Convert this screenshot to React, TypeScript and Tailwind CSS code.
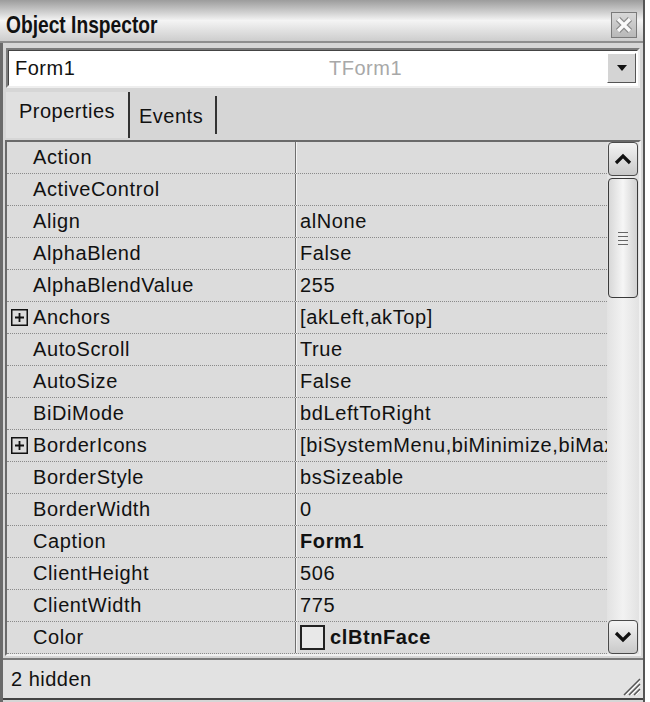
import React from 'react';

type Prop = {
  name: string;
  value?: string;
  expandable?: boolean;
  bold?: boolean;
  swatch?: boolean;
};

const props: Prop[] = [
  { name: 'Action' },
  { name: 'ActiveControl' },
  { name: 'Align', value: 'alNone' },
  { name: 'AlphaBlend', value: 'False' },
  { name: 'AlphaBlendValue', value: '255' },
  { name: 'Anchors', value: '[akLeft,akTop]', expandable: true },
  { name: 'AutoScroll', value: 'True' },
  { name: 'AutoSize', value: 'False' },
  { name: 'BiDiMode', value: 'bdLeftToRight' },
  { name: 'BorderIcons', value: '[biSystemMenu,biMinimize,biMaximize]', expandable: true },
  { name: 'BorderStyle', value: 'bsSizeable' },
  { name: 'BorderWidth', value: '0' },
  { name: 'Caption', value: 'Form1', bold: true },
  { name: 'ClientHeight', value: '506' },
  { name: 'ClientWidth', value: '775' },
  { name: 'Color', value: 'clBtnFace', bold: true, swatch: true },
];

function PlusBox() {
  return (
    <svg width="17" height="17" viewBox="0 0 17 17" className="shrink-0">
      <rect x="0.75" y="0.75" width="15.5" height="15.5" fill="none" stroke="#111" strokeWidth="1.5" />
      <path d="M4 8.5h9M8.5 4v9" stroke="#111" strokeWidth="1.8" />
    </svg>
  );
}

function PropRow({ p }: { p: Prop }) {
  return (
    <div className="flex h-[32px] border-b border-dotted border-[#8a8a8a] text-[20px] leading-[31px] tracking-[0.6px] text-[#111]">
      <div className="flex w-[289px] shrink-0 items-center border-r border-r-[#6f6f6f] pl-[4px]">
        <div className="w-[22px] shrink-0">{p.expandable && <PlusBox />}</div>
        <span className="whitespace-nowrap">{p.name}</span>
      </div>
      <div className="flex min-w-0 flex-1 items-center overflow-hidden border-l border-l-[#f4f4f4] pl-[3px]">
        {p.swatch && (
          <span className="mr-[5px] inline-block h-[25px] w-[25px] shrink-0 border-2 border-[#222] bg-[#e8e8e8]" />
        )}
        <span className={`whitespace-nowrap ${p.bold ? 'font-bold' : ''}`}>{p.value}</span>
      </div>
    </div>
  );
}

function Chevron({ up }: { up?: boolean }) {
  return (
    <svg width="18" height="12" viewBox="0 0 18 12">
      <path d={up ? 'M2 10L9 3l7 7' : 'M2 2l7 7 7-7'} fill="none" stroke="#111" strokeWidth="3.2" />
    </svg>
  );
}

function ScrollBar() {
  return (
    <div className="flex w-[32px] shrink-0 flex-col bg-gradient-to-r from-[#e2e2e2] via-[#f2f2f2] to-[#e2e2e2] px-[1px]">
      <div className="flex h-[34px] items-center justify-center rounded-[4px] border border-[#4a4a4a] bg-gradient-to-b from-[#f4f4f4] to-[#c9c9c9]">
        <Chevron up />
      </div>
      <div className="mt-[2px] flex h-[120px] items-center justify-center rounded-[4px] border border-[#3a3a3a] bg-gradient-to-r from-[#d8d8d8] via-[#f6f6f6] to-[#d2d2d2]">
        <div className="flex flex-col gap-[3px]">
          <div className="h-[1px] w-[10px] bg-[#666]" />
          <div className="h-[1px] w-[10px] bg-[#666]" />
          <div className="h-[1px] w-[10px] bg-[#666]" />
          <div className="h-[1px] w-[10px] bg-[#666]" />
        </div>
      </div>
      <div className="flex-1" />
      <div className="flex h-[34px] items-center justify-center rounded-[4px] border border-[#4a4a4a] bg-gradient-to-b from-[#f4f4f4] to-[#c9c9c9]">
        <Chevron />
      </div>
    </div>
  );
}

export default function App() {
  return (
    <div className="flex h-[702px] w-[650px] flex-col overflow-hidden bg-white font-['Liberation_Sans',Arial,sans-serif] text-[#111]">
      <div className="flex h-[702px] w-[645px] flex-col border-r-2 border-r-[#555] bg-[#d6d6d6]">
        {/* title bar */}
        <div className="flex h-[43px] shrink-0 items-center justify-between border-b-2 border-b-[#8e8e8e] bg-gradient-to-b from-[#9c9c9c] via-[#f4f4f4] to-[#cdcdcd] pl-[6px] pr-[6px] pt-[8px]">
          <span className="inline-block origin-left scale-x-[0.8] whitespace-nowrap text-[24px] leading-[26px] font-bold">
            Object Inspector
          </span>
          <div className="flex h-[26px] w-[26px] items-center justify-center border border-[#7a7a7a] bg-gradient-to-b from-[#d8d8d8] to-[#b8b8b8]">
            <svg width="18" height="18" viewBox="0 0 18 18">
              <path d="M3 3l12 12M15 3L3 15" stroke="#8a8a8a" strokeWidth="6" />
              <path d="M3 3l12 12M15 3L3 15" stroke="#fafafa" strokeWidth="3.4" />
            </svg>
          </div>
        </div>

        <div className="flex flex-1 flex-col border-l-[3px] border-l-[#6a6a6a]">
          {/* object selector */}
          <div className="mx-[3px] mt-[5px] flex h-[40px] items-center border-2 border-t-[#7a7a7a] border-l-[#7a7a7a] border-r-[#eeeeee] border-b-[#eeeeee] bg-white">
            <div className="flex h-full flex-1 items-center border border-t-[#444] border-l-[#444] border-r-white border-b-white text-[20px] tracking-[0.5px]">
              <span className="w-[150px] pl-[6px]">Form1</span>
              <span className="flex-1 pl-[170px] text-[#a8a8a8]">TForm1</span>
              <div className="mr-[1px] flex h-[30px] w-[29px] items-center justify-center border border-t-white border-l-white border-r-[#555] border-b-[#555] bg-[#d4d4d4]">
                <svg width="10" height="6" viewBox="0 0 10 6">
                  <path d="M0 0h10L5 6z" fill="#111" />
                </svg>
              </div>
            </div>
          </div>

          {/* tabs */}
          <div className="flex h-[50px] items-end pl-[3px] text-[20px] leading-[24px] tracking-[0.5px]">
            <div className="flex h-[46px] w-[124px] items-start justify-center border-r-2 border-r-[#333] bg-[#e0e0e0] pt-[7px]">
              Properties
            </div>
            <div className="mb-[4px] flex h-[38px] w-[87px] items-start border-r-2 border-r-[#333] pl-[9px] pt-[8px]">
              Events
            </div>
          </div>

          {/* grid */}
          <div className="mx-[2px] mt-[2px] flex h-[516px] border-2 border-t-[#6a6a6a] border-l-[#6a6a6a] border-r-[#f0f0f0] border-b-[#f0f0f0] bg-[#dcdcdc]">
            <div className="flex min-w-0 flex-1 flex-col overflow-hidden">
              {props.map((p) => (
                <PropRow key={p.name} p={p} />
              ))}
            </div>
            <ScrollBar />
          </div>

          {/* status bar */}
          <div className="relative mt-[2px] flex h-[42px] items-center border-t-2 border-t-[#7a7a7a] border-b-2 border-b-[#444] bg-[#e2e2e2] pl-[8px] text-[20px] tracking-[0.5px]">
            2 hidden
            <svg className="absolute bottom-[2px] right-[2px]" width="22" height="22" viewBox="0 0 22 22">
              <path d="M21 5L5 21M21 10L10 21M21 15L15 21" stroke="#555" strokeWidth="1.5" />
              <path d="M21 7L7 21M21 12L12 21M21 17L17 21" stroke="#fff" strokeWidth="1" />
            </svg>
          </div>
        </div>
      </div>
    </div>
  );
}
